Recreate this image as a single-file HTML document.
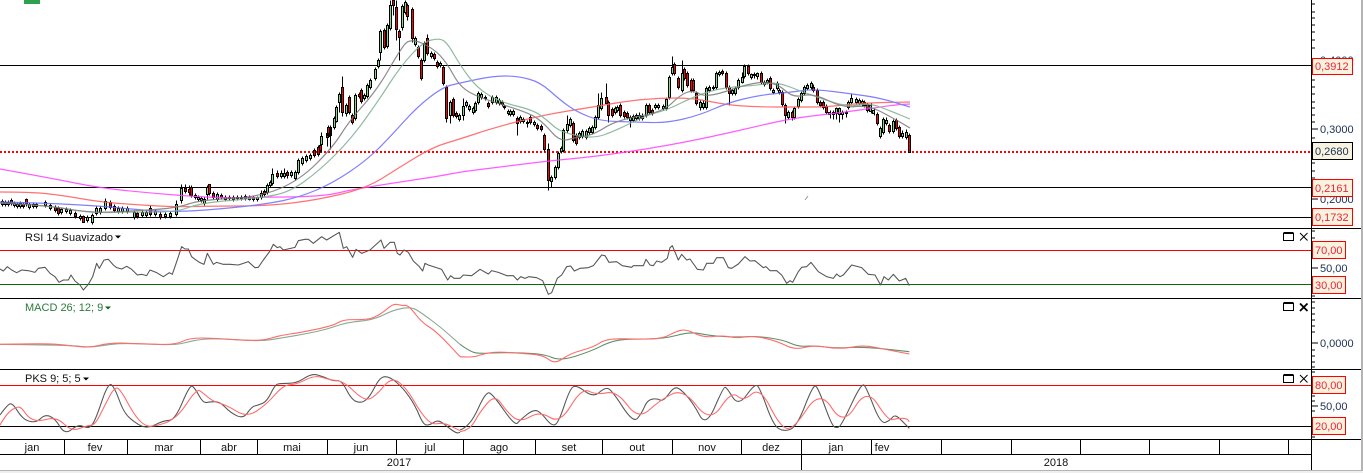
<!DOCTYPE html>
<html><head><meta charset="utf-8"><style>
html,body{margin:0;padding:0;background:#fff;width:1363px;height:473px;overflow:hidden}
svg{display:block;font-family:"Liberation Sans",sans-serif;font-size:11px}
</style></head><body>
<svg width="1363" height="473" viewBox="0 0 1363 473" xmlns="http://www.w3.org/2000/svg">
<rect width="1363" height="473" fill="#fff"/>
<rect x="24" y="0" width="16" height="4" fill="#2da14b"/>

<!-- horizontal levels -->
<g shape-rendering="crispEdges" stroke="#000" fill="none">
<path d="M0 65.5H1312M0 187.5H1312M0 217.5H1312"/>
<path d="M0 228.5H1362M0 298.5H1362M0 369.5H1362M0 439.5H1362M0 454.5H1312"/>
</g>
<path d="M0 152H1312" stroke="#f00" stroke-width="2" stroke-dasharray="2 2" shape-rendering="crispEdges"/>

<!-- candles -->
<g transform="translate(-.5,.5)" shape-rendering="crispEdges">
<path fill="none" stroke="#000" d="M3 199V206M6 200V206M9 200V206M12 198V205M15 201V207M18 202V208M21 201V208M24 202V208M27 198V206M30 202V209M34 202V208M37 202V208M46 200V207M51 203V210M56 205V212M59 206V215M62 207V214M67 207V213M71 208V215M76 211V218M81 214V220M84 215V222M88 215V222M93 213V224M97 206V215M101 206V214M106 198V210M111 200V209M115 204V212M119 206V213M123 206V213M128 206V213M135 210V219M138 211V218M143 210V217M147 210V217M151 205V216M156 209V216M161 212V219M166 212V218M171 211V218M177 200V216M182 184V203M186 184V193M190 185V195M192 185V197M196 193V199M199 195V201M202 196V202M205 197V205M208 185V199M210 184V195M214 191V199M218 192V201M222 193V199M226 195V200M230 195V200M234 195V201M238 195V200M242 195V200M246 194V200M250 195V200M254 196V201M258 196V201M262 190V199M265 189V196M268 183V194M271 180V187M273 168V185M278 170V178M282 170V178M285 168V178M288 170V178M292 170V177M296 170V180M299 158V174M303 156V165M307 154V162M311 153V160M315 148V157M319 145V156M321 143V152M322 132V152M328 127V146M329 125V137M331 125V149M335 116V129M337 105V122M340 92V112M343 76V116M347 103V116M350 95V114M353 113V124M356 93V120M360 92V98M362 88V103M365 93V100M368 83V98M371 78V89M376 67V80M379 58V68M381 29V60M385 28V49M388 23V48M391 0V30M394 0V15M397 0V40M400 29V60M403 4V30M406 0V14M408 3V20M413 7V42M416 36V46M419 45V58M422 58V80M425 41V62M428 34V55M432 51V58M435 52V60M438 60V68M441 61V67M444 65V85M447 85V122M451 100V123M454 97V117M457 111V118M460 113V121M464 98V120M467 100V107M470 104V111M474 106V114M476 101V112M479 91V104M482 92V99M486 95V100M489 101V108M493 95V104M497 95V104M500 98V105M503 100V106M505 104V109M509 109V115M511 109V116M514 109V116M518 116V135M521 115V123M524 117V123M528 120V127M531 115V124M535 120V126M538 123V130M542 124V131M545 133V151M549 143V190M552 175V187M556 165V179M559 151V169M562 146V153M564 128V152M568 115V132M571 117V127M574 121V142M577 133V145M580 131V139M583 129V138M587 129V139M590 126V134M593 125V134M596 115V129M599 93V119M602 92V110M607 83V103M609 100V122M613 107V117M616 106V114M618 105V112M621 103V117M625 110V118M628 111V119M631 115V127M634 114V122M637 113V120M640 112V120M643 113V120M647 103V117M650 103V114M653 108V115M656 103V109M659 103V109M664 104V110M667 97V110M670 75V99M673 56V75M675 62V75M679 76V89M683 60V92M685 67V80M688 71V87M692 78V92M694 78V92M697 91V105M701 100V110M704 100V109M707 86V109M710 85V92M714 85V90M717 71V89M720 70V76M723 69V75M727 71V89M730 85V105M733 88V95M736 86V95M739 78V89M743 72V83M745 64V78M749 64V75M752 73V79M755 72V78M758 72V79M762 71V84M765 80V86M768 78V84M771 76V90M774 88V94M778 81V90M780 88V94M783 90V106M786 103V123M789 110V119M793 110V120M795 106V119M799 97V108M802 91V102M805 85V95M808 83V90M812 81V89M814 84V92M818 88V104M821 100V107M824 100V109M827 104V114M831 110V118M834 110V119M837 107V119M840 107V122M843 110V119M847 110V117M849 100V109M852 94V104M857 97V104M860 98V105M863 99V106M865 100V107M868 102V112M872 103V113M875 108V115M878 112V125M881 126V138M884 117V134M887 117V125M890 123V133M894 119V133M897 118V130M900 125V138M903 130V138M907 129V139M910 133V152"/>
<path fill="#82dc82" stroke="#000" d="M2 201h2V204h-2zM5 202h2V204h-2zM8 202h2V204h-2zM14 203h2V205h-2zM17 204h2V206h-2zM20 203h2V206h-2zM29 204h2V207h-2zM33 204h2V206h-2zM36 204h2V206h-2zM45 202h2V205h-2zM50 205h2V208h-2zM61 209h2V212h-2zM66 209h2V211h-2zM70 210h2V213h-2zM80 216h2V218h-2zM87 217h2V220h-2zM92 215h2V222h-2zM96 208h2V213h-2zM100 208h2V212h-2zM105 201h2V208h-2zM118 208h2V211h-2zM122 208h2V211h-2zM127 208h2V211h-2zM134 212h2V217h-2zM142 212h2V215h-2zM146 212h2V215h-2zM155 211h2V214h-2zM165 214h2V216h-2zM170 213h2V216h-2zM176 204h2V214h-2zM181 188h2V200h-2zM195 195h2V197h-2zM198 197h2V199h-2zM201 198h2V200h-2zM204 199h2V203h-2zM207 187h2V194h-2zM217 194h2V199h-2zM225 197h2V199h-2zM233 197h2V199h-2zM241 197h2V198h-2zM249 197h2V199h-2zM257 197h2V199h-2zM261 193h2V197h-2zM267 185h2V192h-2zM270 182h2V185h-2zM272 174h2V183h-2zM281 173h2V176h-2zM284 173h2V176h-2zM291 172h2V175h-2zM295 172h2V178h-2zM298 160h2V172h-2zM302 158h2V163h-2zM306 156h2V160h-2zM310 155h2V158h-2zM321 136h2V144h-2zM329 127h2V136h-2zM334 118h2V127h-2zM336 107h2V121h-2zM339 94h2V102h-2zM346 105h2V113h-2zM355 95h2V118h-2zM364 95h2V98h-2zM367 85h2V96h-2zM370 80h2V87h-2zM375 69h2V78h-2zM378 60h2V66h-2zM380 31h2V52h-2zM387 25h2V46h-2zM390 5h2V28h-2zM402 6h2V27h-2zM405 2h2V12h-2zM415 38h2V44h-2zM424 43h2V60h-2zM431 53h2V56h-2zM440 63h2V65h-2zM450 102h2V115h-2zM459 115h2V119h-2zM463 106h2V115h-2zM466 102h2V105h-2zM469 106h2V109h-2zM473 108h2V112h-2zM475 103h2V110h-2zM478 93h2V102h-2zM481 94h2V97h-2zM485 97h2V98h-2zM492 97h2V102h-2zM496 97h2V102h-2zM499 100h2V103h-2zM508 111h2V113h-2zM510 111h2V114h-2zM513 111h2V114h-2zM520 117h2V121h-2zM523 119h2V121h-2zM534 122h2V124h-2zM551 177h2V181h-2zM555 167h2V177h-2zM558 153h2V167h-2zM561 148h2V151h-2zM563 130h2V150h-2zM567 124h2V130h-2zM570 119h2V125h-2zM579 133h2V137h-2zM582 131h2V136h-2zM586 131h2V137h-2zM589 128h2V132h-2zM592 127h2V132h-2zM595 117h2V127h-2zM598 105h2V117h-2zM601 98h2V108h-2zM615 108h2V112h-2zM617 107h2V110h-2zM630 117h2V120h-2zM633 116h2V120h-2zM636 115h2V118h-2zM639 115h2V118h-2zM642 116h2V118h-2zM646 105h2V115h-2zM655 105h2V107h-2zM658 105h2V107h-2zM663 106h2V108h-2zM666 99h2V108h-2zM669 77h2V97h-2zM672 67h2V73h-2zM682 73h2V90h-2zM700 102h2V107h-2zM703 103h2V107h-2zM706 88h2V107h-2zM709 87h2V90h-2zM713 87h2V88h-2zM716 73h2V87h-2zM719 72h2V74h-2zM732 90h2V93h-2zM735 88h2V93h-2zM738 80h2V87h-2zM742 77h2V82h-2zM744 66h2V76h-2zM751 74h2V77h-2zM754 74h2V75h-2zM757 73h2V76h-2zM764 82h2V84h-2zM767 80h2V82h-2zM773 90h2V92h-2zM777 83h2V88h-2zM779 90h2V92h-2zM788 112h2V117h-2zM794 108h2V117h-2zM798 99h2V106h-2zM801 93h2V100h-2zM804 87h2V93h-2zM807 85h2V88h-2zM811 83h2V87h-2zM829 112h2V114h-2zM833 112h2V114h-2zM836 108h2V113h-2zM839 108h2V114h-2zM842 112h2V114h-2zM846 112h2V113h-2zM848 102h2V107h-2zM851 98h2V102h-2zM856 99h2V102h-2zM859 100h2V103h-2zM862 101h2V103h-2zM870 105h2V111h-2zM873 110h2V113h-2zM880 128h2V136h-2zM883 119h2V132h-2zM886 120h2V123h-2zM893 121h2V131h-2zM902 133h2V136h-2zM906 132h2V137h-2z"/>
<path fill="#f00" stroke="#000" d="M11 200h2V203h-2zM23 204h2V206h-2zM26 199h2V203h-2zM55 207h2V210h-2zM58 208h2V213h-2zM75 213h2V216h-2zM83 216h2V222h-2zM110 202h2V207h-2zM114 206h2V210h-2zM137 213h2V216h-2zM150 208h2V214h-2zM160 214h2V217h-2zM185 188h2V191h-2zM189 189h2V192h-2zM191 187h2V195h-2zM209 184h2V193h-2zM213 193h2V197h-2zM221 195h2V197h-2zM229 197h2V198h-2zM237 197h2V198h-2zM245 196h2V198h-2zM253 197h2V199h-2zM264 191h2V194h-2zM277 173h2V176h-2zM287 172h2V175h-2zM314 150h2V155h-2zM318 147h2V154h-2zM320 145h2V150h-2zM327 133h2V137h-2zM328 127h2V135h-2zM331 127h1V135h-1zM342 87h2V112h-2zM349 97h2V112h-2zM352 115h2V122h-2zM359 94h2V96h-2zM361 90h2V101h-2zM384 30h2V47h-2zM393 0h2V5h-2zM396 7h2V29h-2zM399 31h2V37h-2zM407 5h2V16h-2zM412 9h2V38h-2zM418 47h2V56h-2zM421 60h2V78h-2zM427 38h2V53h-2zM434 54h2V58h-2zM437 62h2V66h-2zM443 67h2V83h-2zM446 87h2V118h-2zM453 99h2V115h-2zM456 113h2V116h-2zM488 103h2V106h-2zM502 102h2V104h-2zM504 106h2V107h-2zM517 118h2V123h-2zM527 122h2V123h-2zM530 117h2V122h-2zM537 125h2V128h-2zM541 126h2V129h-2zM544 135h2V149h-2zM548 149h2V180h-2zM573 123h2V140h-2zM576 135h2V143h-2zM606 97h2V103h-2zM608 102h2V115h-2zM612 109h2V115h-2zM620 105h2V115h-2zM624 112h2V116h-2zM627 113h2V117h-2zM649 105h2V112h-2zM652 110h2V113h-2zM674 64h2V73h-2zM678 78h2V87h-2zM684 69h2V78h-2zM687 73h2V85h-2zM691 80h2V90h-2zM693 80h2V90h-2zM696 93h2V103h-2zM722 71h2V73h-2zM726 73h2V87h-2zM729 87h2V93h-2zM748 66h2V73h-2zM761 73h2V82h-2zM770 78h2V88h-2zM782 92h2V104h-2zM785 105h2V115h-2zM792 112h2V117h-2zM813 87h2V90h-2zM817 90h2V102h-2zM820 102h2V105h-2zM823 102h2V107h-2zM826 106h2V112h-2zM864 102h2V105h-2zM867 104h2V110h-2zM877 114h2V123h-2zM889 125h2V131h-2zM896 120h2V128h-2zM899 127h2V136h-2zM909 135h2V152h-2z"/>
</g>

<!-- moving averages -->
<g fill="none" stroke-width="1.2" stroke-linejoin="round" opacity=".85">
<polyline class="s" stroke="#ff40ff" points="0,169 50,178 100,188 150,193 200,197 240,198 270,197 300,197 330,195 350,190 400,182 440,176 460,172 500,167 548,161 590,157 627,152 670,145 710,137 750,128 793,118 847,112 893,105 910,104"/>
<polyline class="s" stroke="#ff5a5a" points="0,192 30,192 60,195 100,202 140,205 177,207 213,206 267,206 317,200 367,188 400,167 433,147 460,139 493,128 543,115 593,107 627,101 660,98 693,98 727,105 760,107 793,107 827,107 860,103 910,102"/>
<polyline class="s" stroke="#6a6aff" points="0,202 43,203 100,206 130,209 167,212 210,210 267,204 300,197 333,183 367,160 390,137 417,107 443,87 460,83 493,76 517,76 540,82 560,100 577,112 600,121 633,122 667,123 700,115 727,103 760,95 793,92 813,89 853,94 880,98 910,107"/>
<polyline class="s" stroke="#7cae8f" points="0,203 43,205 90,213 133,212 177,212 200,203 260,198 290,192 320,170 350,140 377,103 400,67 423,42 440,38 448,44 460,65 477,88 500,102 533,110 547,120 560,132 593,139 617,130 647,115 667,110 693,97 720,88 760,85 777,82 803,92 817,97 847,107 870,103 893,112 910,119"/>
<polyline class="s" stroke="#777" points="0,203 45,205 90,213 133,211 177,208 200,200 260,197 300,180 333,147 350,120 377,90 400,50 410,38 433,48 447,63 460,87 480,98 527,112 543,122 560,142 577,137 593,135 617,120 663,112 680,95 693,90 707,98 753,82 777,83 793,98 813,93 843,108 868,105 893,118 910,128"/>
</g>
<path d="M805 200L808 196" stroke="#999" fill="none"/>

<!-- RSI -->
<g fill="none" shape-rendering="crispEdges">
<path d="M0 250.5H1312" stroke="#f00"/>
<path d="M0 284.5H1312" stroke="#0a6a0a"/>
<path d="M0 385.5H1312" stroke="#f00"/>
<path d="M0 426.5H1312" stroke="#000"/>
</g>
<g transform="translate(0,225) scale(.33333)" fill="none" stroke-width="3.2" stroke-linejoin="round">
<polyline stroke="#555" points="0,132 10,138 22,125 35,135 50,143 65,135 85,137 105,142 115,130 135,127 150,145 165,155 177,172 190,165 205,165 213,150 225,168 240,180 250,195 265,178 278,155 290,115 298,130 312,105 325,103 340,120 350,128 365,132 380,124 395,133 412,150 425,148 440,152 450,135 470,143 490,155 508,143 517,148 530,110 545,65 555,72 565,72 575,95 585,103 600,113 612,118 622,85 640,118 650,112 670,118 690,118 715,120 730,115 745,110 765,128 775,127 790,105 810,78 820,58 832,68 840,65 850,75 885,67 895,47 915,43 925,43 940,55 965,35 980,45 1018,22 1030,70 1040,65 1058,97 1068,73 1085,85 1110,75 1143,45 1152,70 1170,52 1183,52 1192,85 1200,90 1212,75 1225,82 1240,108 1258,125 1268,138 1275,115 1285,120 1325,133 1343,165 1352,152 1362,160 1380,160"/>
<polyline class="s" stroke="#8aa893" points="0,358 150,360 220,362 270,367 320,360 360,355 440,357 525,360 560,352 600,343 650,341 720,345 790,348 850,338 920,326 980,313 1040,292 1120,285 1180,255 1235,245 1270,268 1320,305 1380,358"/>
<polyline class="s" stroke="#ff6a6a" points="0,358 130,355 200,360 265,369 330,353 420,356 525,360 570,338 650,340 780,349 840,331 900,323 1000,302 1030,283 1100,285 1140,270 1180,235 1205,242 1225,240 1265,292 1310,320 1380,395"/>
<polyline class="s" stroke="#555" points="0,570 25,535 40,538 60,570 80,588 110,592 135,568 165,580 195,630 235,597 265,612 285,590 325,470 345,490 370,560 400,590 440,612 490,587 525,585 570,478 585,490 610,535 630,530 660,530 690,562 730,582 755,545 775,540 800,530 825,480 840,475 890,475 935,445 970,455 1000,468 1025,466 1055,525 1085,535 1110,515 1140,455 1170,455 1210,490 1245,540 1270,600 1290,600 1315,583 1345,608 1370,625 1380,622"/>
<polyline class="s" stroke="#ff6a6a" points="0,600 20,565 50,545 65,548 85,578 115,590 170,575 215,620 260,602 285,600 310,550 345,482 365,500 400,565 430,600 460,606 530,582 590,490 610,505 640,530 680,540 740,578 800,538 850,480 890,478 945,450 990,465 1030,468 1095,530 1130,510 1175,455 1220,490 1260,560 1295,600 1330,592 1380,617"/>
</g>
<g transform="translate(460,225) scale(.33333)" fill="none" stroke-width="3.2" stroke-linejoin="round">
<polyline stroke="#555" points="0,160 10,150 35,152 60,133 85,147 95,137 115,142 140,152 160,152 172,165 182,155 195,160 207,155 230,158 248,167 265,208 275,203 292,160 305,150 320,125 332,123 343,138 360,130 385,128 400,122 425,90 435,92 447,112 470,110 487,122 515,127 520,122 550,122 558,103 570,120 580,122 590,108 605,112 622,100 630,68 637,62 655,105 665,88 680,105 690,102 712,133 730,135 740,115 760,115 770,98 790,98 805,128 815,130 835,117 855,95 870,108 885,107 910,128 918,125 930,137 950,137 965,150 980,175 990,167 998,172 1015,140 1025,127 1040,125 1053,112 1075,140 1100,155 1120,160 1130,147 1140,155 1150,150 1175,120 1205,128 1225,148 1245,150 1262,180 1272,155 1285,165 1300,148 1318,168 1337,160 1348,182"/>
<polyline class="s" stroke="#5f8f6c" points="0,358 30,380 60,386 130,382 250,386 300,408 390,380 450,350 500,342 610,342 690,320 750,332 830,337 890,333 970,345 1015,365 1060,362 1130,370 1210,365 1348,380"/>
<polyline class="s" stroke="#ff6a6a" points="0,395 40,398 70,386 115,380 180,385 250,390 285,418 330,385 400,367 440,340 540,343 610,340 650,318 680,313 730,338 790,331 830,340 880,332 950,348 1005,375 1060,360 1140,373 1210,360 1270,372 1348,387"/>
<polyline class="s" stroke="#555" points="0,615 30,605 78,498 100,510 165,603 180,585 222,552 245,565 275,603 295,595 330,490 350,480 400,518 435,487 455,495 520,595 545,565 562,525 590,520 610,530 640,487 660,490 700,535 738,607 790,487 800,487 835,545 885,475 900,490 940,600 970,620 1010,607 1060,477 1075,490 1115,600 1130,610 1145,600 1205,472 1220,490 1262,597 1290,587 1305,567 1335,597 1348,610"/>
<polyline class="s" stroke="#ff6a6a" points="0,620 30,615 60,560 105,508 140,560 180,593 240,558 300,597 365,488 410,510 470,497 535,585 600,525 670,490 750,595 815,497 850,530 900,485 960,605 1000,615 1080,492 1150,605 1220,487 1285,588 1310,580 1340,580 1348,590"/>
</g>

<!-- right axis -->
<g shape-rendering="crispEdges" fill="none" stroke="#000">
<path d="M1311.5 0V470"/>
<path d="M1312 4H1315M1312 12H1315M1312 18H1315M1312 25H1315M1312 32H1315M1312 40H1315M1312 48H1315M1312 80H1315M1312 87H1315M1312 94H1315M1312 102H1315M1312 108H1315M1312 115H1315M1312 122H1315M1312 129H1318M1312 138H1315M1312 163H1315M1312 171H1315M1312 178H1315M1312 199H1318M1312 231H1315M1312 238H1315M1312 268H1318M1312 296H1315M1312 302H1315M1312 308H1315M1312 314H1315M1312 320H1315M1312 326H1315M1312 332H1315M1312 343H1318M1312 350H1315M1312 356H1315M1312 362H1315M1312 367H1315M1312 372H1315M1312 396H1315M1312 401H1315M1312 406H1318M1312 411H1315M1312 437H1315"/>
</g>
<g fill="#1c2f55">
<text x="1320" y="64">0,4000</text>
<text x="1320" y="133">0,3000</text>
<text x="1320" y="203">0,2000</text>
<text x="1320" y="272">50,00</text>
<text x="1320" y="347">0,0000</text>
<text x="1320" y="410">50,00</text>
</g>
<g shape-rendering="crispEdges" fill="#f7f3df" stroke="#f00">
<rect x="1312.5" y="58.5" width="40" height="16"/>
<rect x="1312.5" y="142.5" width="40" height="17" stroke="#000"/>
<rect x="1312.5" y="179.5" width="40" height="17"/>
<rect x="1312.5" y="208.5" width="40" height="17"/>
<rect x="1312.5" y="241.5" width="33" height="17"/>
<rect x="1312.5" y="276.5" width="33" height="17"/>
<rect x="1312.5" y="376.5" width="33" height="17"/>
<rect x="1312.5" y="417.5" width="33" height="17"/>
</g>
<g fill="#f0243c">
<text x="1315" y="70">0,3912</text>
<text x="1315" y="192">0,2161</text>
<text x="1315" y="221">0,1732</text>
<text x="1315" y="254">70,00</text>
<text x="1315" y="289">30,00</text>
<text x="1315" y="389">80,00</text>
<text x="1315" y="430">20,00</text>
</g>
<text x="1315" y="155" fill="#1c2f55">0,2680</text>

<!-- panel icons -->
<g fill="none" stroke="#000" shape-rendering="crispEdges">
<path d="M1283.5 233.5h10v7h-10zM1283.5 232.5h10"/>
<path d="M1283.5 303.5h10v7h-10zM1283.5 302.5h10"/>
<path d="M1283.5 375.5h10v7h-10zM1283.5 374.5h10"/>
</g>
<g fill="none" stroke="#000">
<path d="M1300 233L1307.5 240.5M1307.5 233L1300 240.5"/>
<path d="M1300 303.5L1307.5 311M1307.5 303.5L1300 311" stroke-width="1.8"/>
<path d="M1300 375L1307.5 382.5M1307.5 375L1300 382.5"/>
</g>

<!-- panel titles -->
<text x="25" y="241" fill="#111">RSI 14 Suavizado</text>
<path d="M115 235.5h6l-3 3z" fill="#000"/>
<text x="25" y="311" fill="#2b7a3d">MACD 26; 12; 9</text>
<path d="M105 306.5h6l-3 3z" fill="#0a6a0a"/>
<text x="25" y="382" fill="#111">PKS 9; 5; 5</text>
<path d="M83 377.5h6l-3 3z" fill="#000"/>

<!-- time axis -->
<path shape-rendering="crispEdges" fill="none" stroke="#000" d="M64.5 439V454M127.5 439V454M200.5 439V454M257.5 439V454M327.5 439V454M396.5 439V454M463.5 439V454M535.5 439V454M602.5 439V454M672.5 439V454M741.5 439V454M801.5 439V470M871.5 439V454M941.5 439V454M1011.5 439V454M1080.5 439V454M1149.5 439V454M1219.5 439V454M1288.5 439V454"/>
<g fill="#111" text-anchor="middle">
<text x="32" y="451">jan</text>
<text x="95" y="451">fev</text>
<text x="164" y="451">mar</text>
<text x="229" y="451">abr</text>
<text x="292" y="451">mai</text>
<text x="361" y="451">jun</text>
<text x="430" y="451">jul</text>
<text x="499" y="451">ago</text>
<text x="569" y="451">set</text>
<text x="637" y="451">out</text>
<text x="707" y="451">nov</text>
<text x="771" y="451">dez</text>
<text x="836" y="451">jan</text>
<text x="882" y="451">fev</text>
<text x="399" y="466">2017</text>
<text x="1056" y="466">2018</text>
</g>

<!-- window edges -->
<rect x="0" y="470" width="1363" height="3" fill="#efefef"/>
<rect x="0" y="470" width="1363" height="1" fill="#b4b4b4"/>
<rect x="1361" y="0" width="2" height="471" fill="#b4b4b4"/>
</svg>
<script>
document.querySelectorAll('polyline.s').forEach(function(e){
  var p=e.getAttribute('points').trim().split(/\s+/).map(function(s){return s.split(',').map(Number)});
  var d='M'+p[0][0]+' '+p[0][1],n=p.length;
  for(var i=1;i<n-1;i++){d+='Q'+p[i][0]+' '+p[i][1]+' '+(p[i][0]+p[i+1][0])/2+' '+(p[i][1]+p[i+1][1])/2}
  d+='L'+p[n-1][0]+' '+p[n-1][1];
  var q=document.createElementNS('http://www.w3.org/2000/svg','path');
  q.setAttribute('d',d);q.setAttribute('stroke',e.getAttribute('stroke'));
  e.parentNode.replaceChild(q,e);
});
</script>
</body></html>
